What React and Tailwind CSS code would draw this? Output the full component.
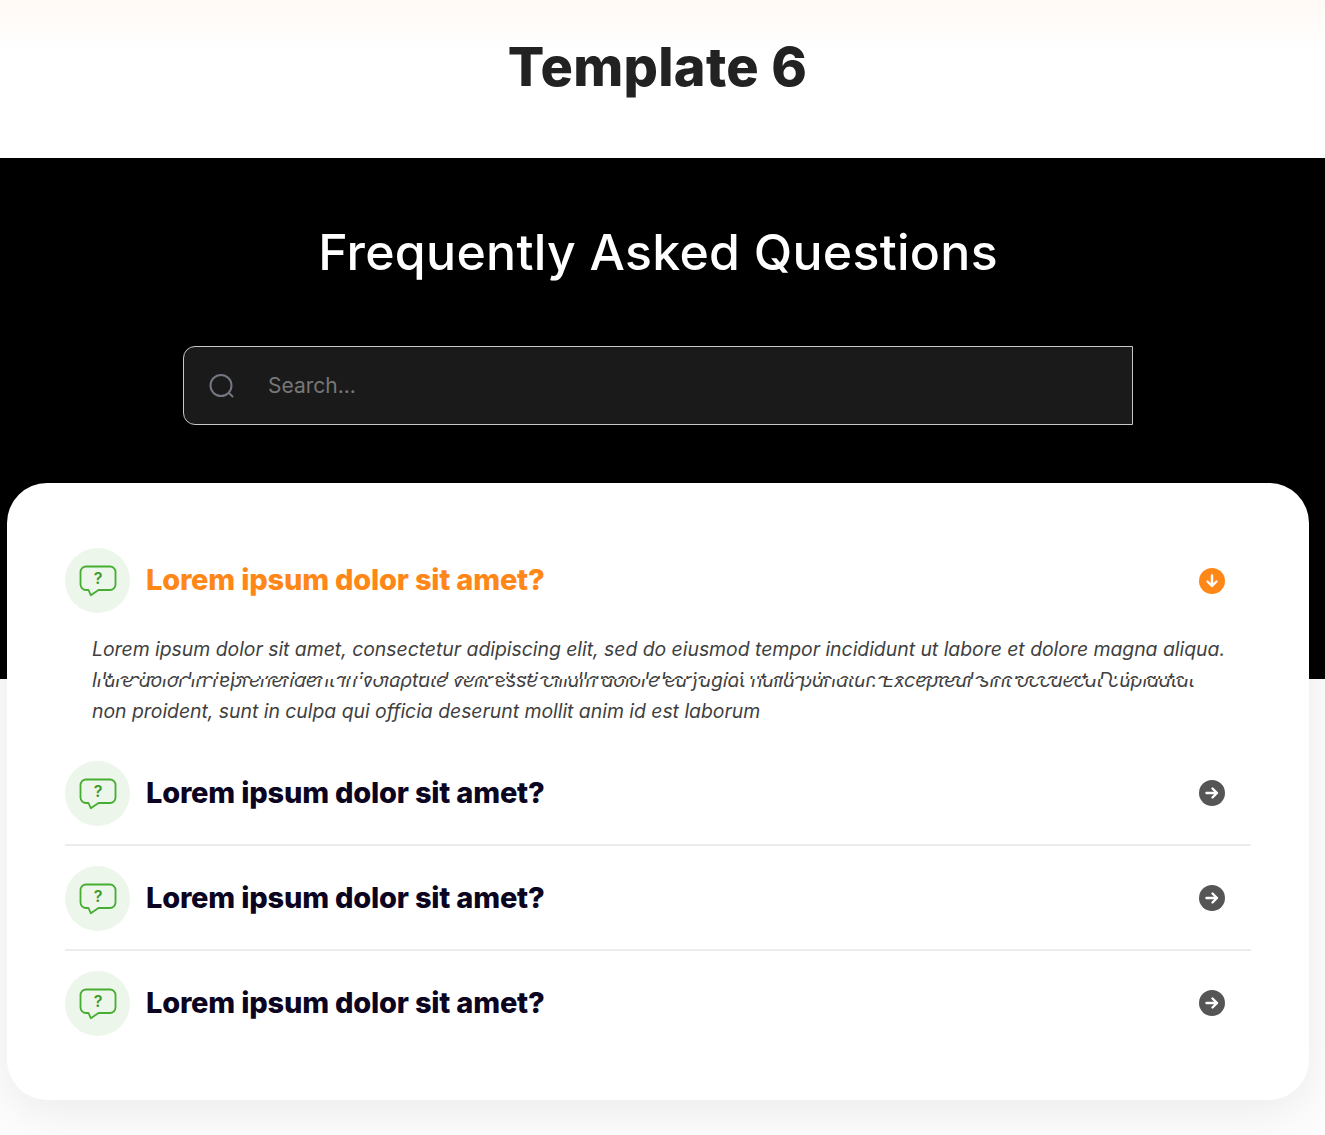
import React from "react";

const font = "font-['Inter','Noto_Sans',sans-serif]";

function ChatIcon() {
  return (
    <div className="flex h-[65px] w-[65px] shrink-0 items-center justify-center rounded-full bg-[#ecf6ea]">
      <svg width="38" height="33" viewBox="0 0 38 33" fill="none" className="mt-[1px]">
        <path
          d="M7 1.5H31A5.5 5.5 0 0 1 36.5 7V19.5A5.5 5.5 0 0 1 31 25H19.5L11.8 30.2L9.5 25H7A5.5 5.5 0 0 1 1.5 19.5V7A5.5 5.5 0 0 1 7 1.5Z"
          stroke="#45ad2f"
          strokeWidth="1.8"
          strokeLinejoin="round"
        />
        <text x="19" y="19" textAnchor="middle" fontSize="16" fontWeight="600" fill="#3f9a2d" fontFamily="Inter, sans-serif">?</text>
      </svg>
    </div>
  );
}

function ArrowIcon({ active }) {
  return (
    <svg width="26" height="26" viewBox="0 0 26 26" fill="none">
      <circle cx="13" cy="13" r="13" fill={active ? "#ff8717" : "#555555"} />
      <path
        d={active ? "M13 7.5V18M8.5 13.5L13 18L17.5 13.5" : "M7.5 13H18M13.5 8.5L18 13L13.5 17.5"}
        stroke="#ffffff"
        strokeWidth="2.4"
        strokeLinecap="round"
        strokeLinejoin="round"
      />
    </svg>
  );
}

function Row({ active, border }) {
  return (
    <div className={border ? "border-b-2 border-[#ececec] pb-[18px] mb-[20px]" : ""}>
      <div className="flex items-center">
        <ChatIcon />
        <h3 className={`ml-[16px] mt-[-2px] flex-1 text-[29px] leading-[40px] font-extrabold tracking-[-0.2px] ${active ? "text-[#ff8717]" : "text-[#0b0521]"}`}>
          Lorem ipsum dolor sit amet?
        </h3>
        <span className={`mr-[26px] flex items-center ${active ? "" : "mt-[-2px]"}`}>
          <ArrowIcon active={active} />
        </span>
      </div>
    </div>
  );
}

export default function App() {
  return (
    <div className={`${font} relative min-h-[1135px] w-full overflow-hidden bg-[#fdfdfd]`}>
      <header className="flex h-[158px] items-start justify-center bg-[linear-gradient(#fff9f5,#ffffff_50px)] pt-[32px] pr-[10px]">
        <h1 className="text-[54px] leading-[70px] font-extrabold tracking-[0.3px] text-[#222222]">Template 6</h1>
      </header>

      <section className="flex h-[521px] flex-col items-center bg-black pt-[58px] pr-[9px]">
        <h2 className="text-[50px] leading-[72px] font-medium tracking-[0.27px] text-white">Frequently Asked Questions</h2>
        <div className="mt-[58px] flex h-[79px] w-[950px] items-center rounded-l-[12px] border border-[#c8c8c8] bg-[#1a1a1a] pl-[25px]">
          <svg width="26" height="26" viewBox="0 0 26 26" fill="none" stroke="#737780" strokeWidth="2" strokeLinecap="round">
            <circle cx="12" cy="12.5" r="10.5" />
            <path d="M20 20L23.5 23.5" />
          </svg>
          <span className="ml-[33px] text-[21px] leading-[30px] text-[#777777]">Search...</span>
        </div>
      </section>

      <main className="relative mt-[-196px] mb-[34px] ml-[7px] w-[1302px] rounded-[40px] bg-white px-[58px] pt-[65px] pb-[64px] shadow-[0_10px_50px_rgba(0,0,0,0.08)]">
        <Row active />
        <div className="mt-[21px] mb-[34px] pl-[27px] text-[19.4px] leading-[31px] tracking-[-0.02px] text-[#3f3f3f] italic">
          <p className="whitespace-nowrap">Lorem ipsum dolor sit amet, consectetur adipiscing elit, sed do eiusmod tempor incididunt ut labore et dolore magna aliqua.</p>
          <div className="relative h-[31px] whitespace-nowrap">
            <p className="absolute top-0 left-0 [clip-path:inset(0_-20px_17px_-20px)]">Ut enim ad minim veniam, quis nostrud exercitation ullamco laboris nisi ut aliquip ex ea commodo consequat. Duis aute</p>
            <p className="absolute top-0 left-0 tracking-[-0.07px] [clip-path:inset(14px_-20px_0_-20px)]">irure dolor in reprehenderit in voluptate velit esse cillum dolore eu fugiat nulla pariatur. Excepteur sint occaecat cupidatat</p>
          </div>
          <p className="whitespace-nowrap">non proident, sunt in culpa qui officia deserunt mollit anim id est laborum</p>
        </div>
        <Row border />
        <Row border />
        <Row />
      </main>
    </div>
  );
}
